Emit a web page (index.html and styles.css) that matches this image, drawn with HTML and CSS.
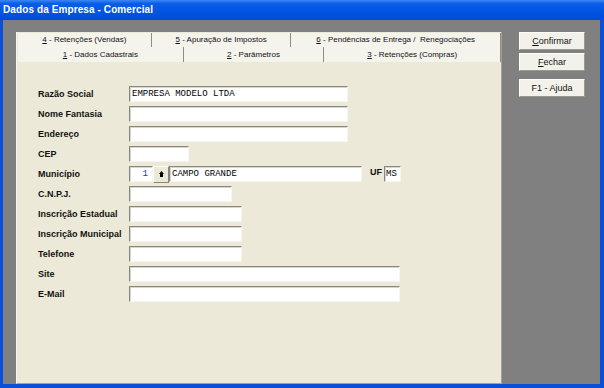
FILE: index.html
```html
<!DOCTYPE html>
<html lang="pt-BR">

<head>
    <meta charset="UTF-8">
    <title>Dados da Empresa - Comercial</title>
    <link rel="stylesheet" href="styles.css">
</head>

<body>
    <div class="window">
        <div class="titlebar">Dados da Empresa - Comercial</div>

        <div class="frame">
            <div class="tabs">
                <!-- Back row of tabs -->
                <div class="tab-row">
                    <div class="tab t4"><u>4</u> - Retenções (Vendas)</div>
                    <div class="tab t5"><u>5</u> - Apuração de Impostos</div>
                    <div class="tab t6"><u>6</u> - Pendências de Entrega / &nbsp;Renegociações</div>
                </div>
                <!-- Front row of tabs -->
                <div class="tab-row">
                    <div class="tab t1"><u>1</u> - Dados Cadastrais</div>
                    <div class="tab t2"><u>2</u> - Parâmetros</div>
                    <div class="tab t3"><u>3</u> - Retenções (Compras)</div>
                </div>

                <div class="page">
                    <div class="row">
                        <label>Razão Social</label>
                        <input class="field wide" type="text" value="EMPRESA MODELO LTDA">
                    </div>
                    <div class="row">
                        <label>Nome Fantasia</label>
                        <input class="field wide" type="text">
                    </div>
                    <div class="row">
                        <label>Endereço</label>
                        <input class="field wide" type="text">
                    </div>
                    <div class="row">
                        <label>CEP</label>
                        <input class="field cep" type="text">
                    </div>
                    <div class="row">
                        <label>Município</label>
                        <input class="field code" type="text" value="1">
                        <button class="lookup">
                            <svg width="5" height="7" viewBox="0 0 5 7">
                                <polygon points="2.5,0 5,3 0,3" fill="#000"/>
                                <rect x="1" y="3" width="3" height="3" fill="#000"/>
                            </svg>
                        </button>
                        <input class="field city" type="text" value="CAMPO GRANDE">
                        <label class="uf-label">UF</label>
                        <input class="field uf" type="text" value="MS">
                    </div>
                    <div class="row">
                        <label>C.N.P.J.</label>
                        <input class="field cnpj" type="text">
                    </div>
                    <div class="row">
                        <label>Inscrição Estadual</label>
                        <input class="field short" type="text">
                    </div>
                    <div class="row">
                        <label>Inscrição Municipal</label>
                        <input class="field short" type="text">
                    </div>
                    <div class="row">
                        <label>Telefone</label>
                        <input class="field short" type="text">
                    </div>
                    <div class="row">
                        <label>Site</label>
                        <input class="field long" type="text">
                    </div>
                    <div class="row">
                        <label>E-Mail</label>
                        <input class="field long" type="text">
                    </div>
                </div>
            </div>

            <div class="actions">
                <button class="btn"><u>C</u>onfirmar</button>
                <button class="btn"><u>F</u>echar</button>
                <button class="btn help">F1 - Ajuda</button>
            </div>
        </div>
    </div>
</body>

</html>
```

FILE: styles.css
```css
body {
    margin: 0;
    width: 604px;
    height: 388px;
    overflow: hidden;
    font-family: "Liberation Sans", Arial, sans-serif;
}

.window {
    height: 388px;
    display: flex;
    flex-direction: column;
    background-color: #0b4ed8;
}

.titlebar {
    height: 20px;
    line-height: 20px;
    padding-left: 3px;
    color: #fff;
    font-size: 10px;
    font-weight: bold;
    letter-spacing: 0.1px;
    background: linear-gradient(to bottom, #3b88f5 0%, #0a5de6 18%, #0054e3 60%, #004bd6 100%);
}

.frame {
    flex: 1;
    margin: 0 4px 4px 3px;
    background-color: #808080;
    display: flex;
    align-items: flex-start;
}

.tabs {
    margin: 12px 0 0 13px;
    width: 484px;
    height: 350px;
    padding-top: 1px;
    background-color: #ece9d8;
    border-left: 1px solid #f7f6f0;
    border-right: 1px solid #a5a292;
    border-bottom: 1px solid #a5a292;
    display: flex;
    flex-direction: column;
}

.tab-row {
    display: flex;
    padding-left: 1px;
}

.tab {
    height: 14px;
    line-height: 14px;
    font-size: 8px;
    text-align: center;
    white-space: nowrap;
    background-color: #f4f3ec;
    border-right: 1px solid #8f8d82;
    box-sizing: border-box;
    color: #111;
}

.tab-row:nth-child(2) .tab {
    height: 15px;
    line-height: 15px;
}

.t4 { width: 134px; }
.t5 { width: 140px; }
.t6 { width: 210px; }
.t1 { width: 166px; }
.t2 { width: 141px; }
.t3 { width: 177px; }

.page {
    padding: 22px 0 0 21px;
    display: flex;
    flex-direction: column;
}

.row {
    display: flex;
    align-items: center;
    height: 20px;
}

.row label {
    width: 91px;
    font-size: 9px;
    font-weight: bold;
    white-space: nowrap;
    color: #111;
}

.field {
    height: 16px;
    box-sizing: border-box;
    margin: 0;
    padding: 0 2px;
    font-family: "Liberation Mono", "Courier New", monospace;
    font-size: 9px;
    color: #000;
    background-color: #fff;
    border-top: 1px solid #8a887d;
    border-left: 1px solid #8a887d;
    border-right: 1px solid #f6f5ef;
    border-bottom: 1px solid #f6f5ef;
    box-shadow: inset 1px 1px 0 #d8d6cc;
    outline: none;
}

.wide { width: 219px; }
.cep { width: 60px; }
.cnpj { width: 103px; }
.short { width: 113px; }
.long { width: 271px; }

.code {
    width: 24px;
    text-align: right;
    padding-right: 4px;
    color: #1a3ab8;
}

.lookup {
    width: 16px;
    height: 17px;
    margin: 0;
    padding: 0;
    background-color: #ece9d8;
    border-top: 1px solid #fff;
    border-left: 1px solid #fff;
    border-right: 1px solid #8a887d;
    border-bottom: 1px solid #8a887d;
    display: flex;
    align-items: center;
    justify-content: center;
}

.city { width: 193px; }

.row .uf-label {
    width: auto;
    margin: 0 2px 4px 8px;
}

.uf { width: 17px; padding: 0 1px; }

.actions {
    margin: 12px 0 0 17px;
    width: 66px;
    display: flex;
    flex-direction: column;
    gap: 3px;
}

.btn {
    height: 18px;
    margin: 0;
    padding: 0;
    font-family: "Liberation Sans", Arial, sans-serif;
    font-size: 9px;
    color: #111;
    background-color: #f3f2ea;
    border-top: 1px solid #fdfdfb;
    border-left: 1px solid #fdfdfb;
    border-right: 1px solid #9b998e;
    border-bottom: 1px solid #9b998e;
}

.help {
    margin-top: 5px;
}
```
